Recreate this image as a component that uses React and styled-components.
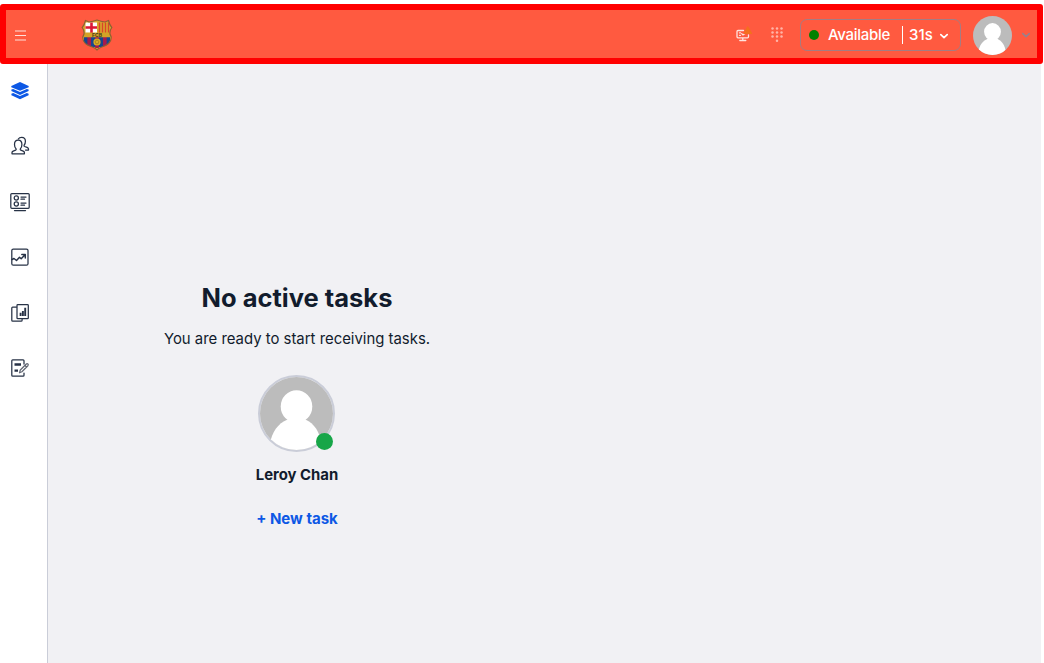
import React from "react";
import styled, { createGlobalStyle } from "styled-components";

const Global = createGlobalStyle`
  * { box-sizing: border-box; }
  body { margin: 0; background: #fff; overflow: hidden; font-family: Inter, "Liberation Sans", sans-serif; color: #121c2d; }
  svg { display: block; flex: none; }
`;

const Page = styled.div`
  display: flex;
  flex-direction: column;
  width: 1044px;
  height: 663px;
  padding-top: 4px;
`;

const Header = styled.header`
  display: flex;
  align-items: center;
  flex: none;
  height: 60px;
  margin-right: 1px;
  border: 6px solid #ff0000;
  border-radius: 3px;
  background: #ff5a40;
  color: #fff;
  padding: 2px 6px 0 8px;
`;

const Crest = styled.div`
  margin-left: 54px;
`;

const Tools = styled.div`
  display: flex;
  align-items: center;
  margin-left: auto;
`;

const Keypad = styled.div`
  margin: 0 17px 0 18px;
`;

const Status = styled.div`
  display: flex;
  align-items: center;
  width: 161px;
  height: 32px;
  padding-left: 8px;
  margin-bottom: 1px;
  border: 1px solid #a57c83;
  border-radius: 7px;
  font-size: 15px;
  font-weight: 500;
  line-height: 20px;
  white-space: nowrap;
`;

const Dot = styled.span`
  flex: none;
  width: 10px;
  height: 10px;
  border-radius: 50%;
  background: #008000;
`;

const StatusName = styled.span`
  width: 74px;
  margin-left: 9px;
  letter-spacing: -0.28px;
`;

const Timer = styled.span`
  display: flex;
  align-items: center;
  gap: 6px;
  &::before {
    content: "";
    width: 1px;
    height: 18px;
    background: #fff;
  }
`;

const StatusChevron = styled.span`
  margin: 2px 0 0 6px;
`;

const Account = styled.div`
  display: flex;
  align-items: center;
  gap: 9px;
  margin-left: 12px;
`;

const Body = styled.div`
  display: flex;
  flex: 1;
  min-height: 0;
  margin-right: 3px;
`;

const Sidebar = styled.nav`
  display: flex;
  flex-direction: column;
  align-items: center;
  gap: 35.4px;
  width: 48px;
  padding: 17px 7px 0 0;
  border-right: 1px solid #cacdd8;
  background: #fff;
  color: #273246;
`;

const Main = styled.main`
  flex: 1;
  background: #f1f1f4;
`;

const TaskPanel = styled.section`
  display: flex;
  flex-direction: column;
  align-items: center;
  width: 498px;
  padding-top: 216px;
`;

const Title = styled.h1`
  margin: 0;
  font-size: 25.5px;
  line-height: 36px;
  font-weight: 700;
`;

const Message = styled.p`
  margin: 12px 0 0;
  font-size: 14.9px;
  line-height: 22px;
`;

const AvatarFrame = styled.div`
  position: relative;
  width: 77px;
  height: 77px;
  margin: 25px 1px 0 0;
  border: 2px solid #cacdd8;
  border-radius: 50%;
`;

const Presence = styled.span`
  position: absolute;
  right: 0;
  bottom: 0;
  width: 17px;
  height: 17px;
  border-radius: 50%;
  background: #17a648;
`;

const Name = styled.div`
  margin-top: 12px;
  font-size: 14.9px;
  line-height: 22px;
  font-weight: 700;
`;

const NewTask = styled.button`
  margin-top: 22px;
  padding: 0;
  border: 0;
  background: none;
  color: #0d58e5;
  font: 700 15px/22px Inter, "Liberation Sans", sans-serif;
`;

function Person({ size, id }) {
  return (
    <svg width={size} height={size} viewBox="0 0 74 74">
      <clipPath id={id}><circle cx="37" cy="37" r="37" /></clipPath>
      <g clipPath={`url(#${id})`}>
        <path fill="#bcbcbc" d="M0 0h74v74H0z" />
        <ellipse cx="37" cy="30" rx="16" ry="16.5" fill="#fff" />
        <path fill="#fff" d="M28 43h18c9 4 15 13 16 25v8H10v-8c2-12 8-21 18-25Z" />
      </g>
    </svg>
  );
}

function Chevron({ color, size = 10 }) {
  return (
    <svg width={size} height={size} viewBox="0 0 10 10" fill="none" stroke={color} strokeWidth="1.7" strokeLinecap="round" strokeLinejoin="round">
      <path d="m1.8 3.6 3.2 3 3.2-3" />
    </svg>
  );
}

function MenuIcon() {
  return (
    <svg width="13" height="11" viewBox="0 0 13 11" stroke="#ffe0da" strokeWidth="1.1">
      <path d="M1 1h11M1 5.5h11M1 10h11" />
    </svg>
  );
}

function Logo() {
  const outline = "M4.500 1.500 8 3q4-.5 8-2 4 1.500 8 2l3.500-1.500Q28.500 6 30.800 8.500 28.500 11.500 29 15l1.200 3c.3 7-6 9-10 10.200Q17 29.500 16 31q-1-1.500-4-2.800C8 27 1.500 25 1.800 18L3 15Q3.500 11.500 1.200 8.500 3.500 6 4.500 1.500Z";
  return (
    <svg width="32" height="32" viewBox="0 0 32 32">
      <clipPath id="crest"><path d={outline} /></clipPath>
      <g clipPath="url(#crest)">
        <path fill="#d9a62e" d="M0 0h32v32H0z" />
        <path fill="#fff" d="M4.500 3.500H16V14H4.500z" />
        <path stroke="#dc1636" strokeWidth="2.600" d="M10.500 3.500V14M4.500 8.500H16" />
        <path stroke="#da4628" strokeWidth="1.400" d="M18.500 3.500V14M21.500 3.500V14M24.500 3.500V14M27.500 3.500V14" />
        <path fill="#16478f" d="M3 18h26v10H3z" />
        <path stroke="#a71b4c" strokeWidth="3.700" d="M8.200 18v9M16 18v11M23.800 18v9" />
        <path fill="#d4a326" d="M1 13.500h30v4.700H1z" />
        <circle cx="16" cy="23" r="3.600" fill="#d8ae20" />
        <path fill="none" stroke="#94702a" strokeWidth=".7" d="m16 21 2 1.400-.8 2.300h-2.400L14 22.400z" />
      </g>
      <text x="16" y="17.700" textAnchor="middle" fontSize="5" fontWeight="700" fill="#443b1f" fontFamily="Inter, sans-serif">FCB</text>
      <path fill="none" stroke="#8e6032" strokeWidth="1.200" d={outline} />
    </svg>
  );
}

function MonitorIcon() {
  return (
    <svg width="18" height="18" viewBox="0 0 18 18" fill="none">
      <path stroke="#ffe4df" strokeWidth="1.300" strokeLinecap="round" d="M8.500 4.500H3q-1 0-1 1v5.300q0 1 1 1h9.500q1 0 1-1V9M7.800 12v2.300m-3 .2h6M4.500 6.800h1M4.500 9.300h1m1.200-1.700L8 9l2.700-2" />
      <path fill="#f3701f" d="M12 .8q.8-1 1.500 0l3.500 6.100q.4 1.100-.8 1.100H9.600q-1.200 0-.8-1.100z" />
    </svg>
  );
}

function KeypadIcon() {
  const dots = [[1.5, 1.5], [6, 1.5], [10.5, 1.5], [1.5, 5.5], [6, 5.5], [10.5, 5.5], [1.5, 9.5], [6, 9.5], [10.5, 9.5], [6, 13.8]];
  return (
    <svg width="12" height="16" viewBox="0 0 12 16" fill="#ffb5a8">
      {dots.map(([x, y]) => <circle key={`${x}-${y}`} cx={x} cy={y} r="1.25" />)}
    </svg>
  );
}

function NavIcon({ children, ...rest }) {
  return (
    <svg width="20" height="20" viewBox="0 0 20 20" fill="none" stroke="currentColor" strokeWidth="1.250" strokeLinecap="round" strokeLinejoin="round" {...rest}>
      {children}
    </svg>
  );
}

export default function App() {
  return (
    <Page>
      <Global />
      <Header>
        <MenuIcon />
        <Crest><Logo /></Crest>
        <Tools>
          <MonitorIcon />
          <Keypad><KeypadIcon /></Keypad>
          <Status>
            <Dot />
            <StatusName>Available</StatusName>
            <Timer>31s</Timer>
            <StatusChevron><Chevron color="#fff" /></StatusChevron>
          </Status>
          <Account>
            <Person size={39} id="account-photo" />
            <Chevron color="#98808c" />
          </Account>
        </Tools>
      </Header>
      <Body>
        <Sidebar>
          <NavIcon stroke="none" fill="#0d58e5">
            <path d="M10 1 18.700 5v1.200L10 9.800 1.300 6.200V5z" />
            <path d="m1.400 8.600 1.800-.7L10 11l6.800-3.100 1.800.7v1.500L10 14l-8.600-3.900z" />
            <path d="m1.400 12.700 1.800-.7 6.800 3.100 6.800-3.100 1.800.7v1.500L10 18.300l-8.600-4.100z" />
          </NavIcon>
          <NavIcon>
            <path d="M8.300 3Q9.300 1.300 11.700 1.300q3.700 0 3.700 3.900 0 2.600-1.300 4-.4.900.5 1.300l2.500.9q1.400.6 1.400 1.500v1.200h-3" />
            <path fill="#fff" d="M2 17.800v-1.200q0-1 1.200-1.500l2.400-.9q.9-.4.400-1.400-1.500-1.500-1.500-4.300 0-4.300 3.700-4.300t3.700 4.300q0 2.800-1.500 4.300-.5 1 .4 1.400l2.400.9q1.200.5 1.200 1.500v1.200z" />
          </NavIcon>
          <NavIcon>
            <rect x=".8" y="1.500" width="18.400" height="14.800" rx="1" />
            <path d="M4.500 18.500h11M11 5h5M11 7.200h3.500M11 11h5M11 13.200h3.500" />
            <circle cx="6.300" cy="6" r="2.100" /><circle cx="6.300" cy="12" r="2.100" />
          </NavIcon>
          <NavIcon>
            <rect x="1.800" y="2" width="16.200" height="16.200" rx="1.500" />
            <path strokeWidth="1.450" d="m2 12.500 2-1 2.500 2 3-3.300 1.700 1.600L15 7.800M11.800 7.500h3.500V11" />
          </NavIcon>
          <NavIcon>
            <path d="M6.500 4H2.700q-.9 0-.9.900v12.400q0 .9.900.9h8.500q.9 0 .9-.9v-1" />
            <rect x="7" y="1.700" width="11.300" height="14" rx=".8" />
            <path strokeWidth="1.900" strokeLinecap="butt" d="M10.600 13V9.800M12.900 13V8M15.200 13V4.800" />
          </NavIcon>
          <NavIcon>
            <path d="M14 6V2.800q0-.9-.9-.9H2.700q-.9 0-.9.900v14.500q0 .9.900.9h10.400q.9 0 .9-.9V15" />
            <path strokeWidth="2.400" strokeLinecap="butt" d="M4.500 6.500H11M4.500 12.600H8" />
            <path stroke="#626773" d="m9.500 14.800.8-2.800 6-6q.8-.8 1.600 0t0 1.700l-6 6zM15 7.500l1.500 1.500" />
          </NavIcon>
        </Sidebar>
        <Main>
          <TaskPanel>
            <Title>No active tasks</Title>
            <Message>You are ready to start receiving tasks.</Message>
            <AvatarFrame>
              <Person size={73} id="profile-photo" />
              <Presence />
            </AvatarFrame>
            <Name>Leroy Chan</Name>
            <NewTask>+ New task</NewTask>
          </TaskPanel>
        </Main>
      </Body>
    </Page>
  );
}
